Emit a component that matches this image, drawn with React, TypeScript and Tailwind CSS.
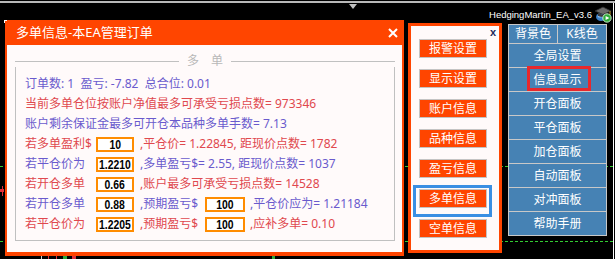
import React from "react";

const cjk = "font-['Noto_Sans','Noto_Sans_CJK_SC',sans-serif]";
const BLUE = "text-[#6a5acd]";
const RED = "text-[#e0484e]";

function ValueBox({ value, wide = false }: { value: string; wide?: boolean }) {
  return (
    <span
      className={`inline-flex h-[15px] shrink-0 items-center justify-center border-2 border-[#ff8c00] bg-white ${
        wide ? "w-[40px]" : "w-[38px]"
      }`}
    >
      <span className="inline-block scale-x-[0.8] font-['Liberation_Sans',sans-serif] text-[13px] font-bold leading-none text-black">
        {value}
      </span>
    </span>
  );
}

function Label({ children, w }: { children: React.ReactNode; w: string }) {
  return <span className={`shrink-0 ${w}`}>{children}</span>;
}

const menuButtons = ["报警设置", "显示设置", "账户信息", "品种信息", "盈亏信息", "多单信息", "空单信息"];
const panelButtons = ["全局设置", "信息显示", "开仓面板", "平仓面板", "加仓面板", "自动面板", "对冲面板", "帮助手册"];

function CapIcon() {
  return (
    <svg width="18" height="18" viewBox="0 0 18 18">
      <ellipse cx="7" cy="12" rx="5" ry="4" fill="#3a7fc8" />
      <ellipse cx="6" cy="11" rx="2.5" ry="1.6" fill="#9fd0ff" />
      <path d="M1 6 L9 2 L17 6 L9 9.5 Z" fill="#6b6b6b" stroke="#2c2c2c" strokeWidth="0.8" />
      <path d="M4 8 L4 11 Q9 13 14 11 L14 8 L9 10 Z" fill="#3b3b3b" />
      <line x1="16" y1="6" x2="16" y2="10" stroke="#c8a030" strokeWidth="1" />
      <circle cx="13" cy="13" r="4.2" fill="#2faa3a" stroke="#e8ffe8" strokeWidth="0.8" />
      <path d="M11.6 10.9 L15.4 13 L11.6 15.1 Z" fill="#ffffff" />
    </svg>
  );
}

export default function App() {
  return (
    <div className={`relative h-[259px] w-[615px] overflow-hidden bg-black ${cjk}`}>
      {/* chart background */}
      <div className="absolute left-0 right-0 top-[1px] h-[2px] bg-[#b8b8b8]" />
      <div className="absolute left-[613px] top-[3px] bottom-0 w-[1px] bg-white" />
      <div className="absolute left-0 top-[166px] w-[613px] border-t border-dashed border-[#32cd32]" />
      <div className="absolute left-0 top-[241px] w-[613px] border-t border-dashed border-[#32cd32]" />
      <div className="absolute left-[2px] top-[186px] h-[10px] w-[1px] bg-[#e0303a]" />
      <div className="absolute left-0 top-[189px] h-[3px] w-[4px] bg-[#e0303a]" />
      <div className="absolute left-[41px] top-[256px] h-[3px] w-[1px] bg-[#d0d0d0]" />
      <div className="absolute left-[48px] top-[256px] h-[3px] w-[1px] bg-[#e0303a]" />
      <div className="absolute left-[56px] top-[256px] h-[3px] w-[1px] bg-[#e0303a]" />
      <div className="absolute left-[63px] top-[256px] h-[3px] w-[4px] bg-[#2faa3a]" />
      <div className="absolute left-[72px] top-[256px] h-[3px] w-[4px] bg-[#e0303a]" />
      <div className="absolute left-[272px] top-[256px] h-[3px] w-[3px] bg-[#2faa3a]" />

      <div className="relative flex h-full flex-col">
        {/* header strip */}
        <div className="flex h-[20px] items-start">
          <div className="w-[349px] shrink-0" />
          <div className="mt-[4px] h-0 w-0 border-x-[4px] border-t-[5px] border-x-transparent border-t-[#c0c0c0]" />
          <div className="flex-1" />
          <span className="mt-[9px] font-['Liberation_Sans',sans-serif] text-[9.5px] leading-[12px] text-white">
            HedgingMartin_EA_v3.6
          </span>
          <div className="ml-[2px] mt-[5px] shrink-0">
            <CapIcon />
          </div>
          <div className="w-[3px] shrink-0" />
        </div>

        <div className="flex items-start">
          {/* main info panel */}
          <div className="ml-[5px] flex h-[236px] w-[399px] shrink-0 flex-col bg-[#ff4500] px-[2px] pb-[4px]">
            <div className="flex h-[25px] items-center justify-between pl-[9px] pr-[4px] text-[13px] leading-none text-white">
              <span>多单信息-本EA管理订单</span>
              <svg width="10" height="10" viewBox="0 0 10 10">
                <path d="M1 1 L9 9 M9 1 L1 9" stroke="#ffffff" strokeWidth="2" />
              </svg>
            </div>
            <div className="flex-1 bg-[#fffafa] pt-[10px]">
              <div className="ml-[8px] w-[380px]">
                <div className="flex h-[12px] items-center">
                  <div className="h-[1px] flex-1 bg-[#c0c0c0]" />
                  <span className="whitespace-pre px-[8px] text-[12px] leading-none text-[#b8b8b8]">多　单</span>
                  <div className="h-[1px] flex-1 bg-[#c0c0c0]" />
                </div>
                <div className="border-x border-b border-[#c0c0c0] pb-[6px] pl-[9px] pt-[7px] text-[12px] leading-[20px]">
                  <div className={`flex h-[20px] items-center whitespace-pre ${BLUE}`}>
                    订单数: 1  盈亏: -7.82  总合位: 0.01
                  </div>
                  <div className={`flex h-[20px] items-center whitespace-pre ${RED}`}>
                    当前多单仓位按账户净值最多可承受亏损点数= 973346
                  </div>
                  <div className={`flex h-[20px] items-center whitespace-pre ${BLUE}`}>
                    账户剩余保证金最多可开仓本品种多单手数= 7.13
                  </div>
                  <div className={`flex h-[20px] items-center whitespace-pre ${RED}`}>
                    <Label w="w-[71px]">若多单盈利$</Label>
                    <ValueBox value="10" />
                    <span className="ml-[6px]">,平仓价= 1.22845, 距现价点数= 1782</span>
                  </div>
                  <div className={`flex h-[20px] items-center whitespace-pre ${BLUE}`}>
                    <Label w="w-[71px]">若平仓价为</Label>
                    <ValueBox value="1.2210" />
                    <span className="ml-[6px]">,多单盈亏$= 2.55, 距现价点数= 1037</span>
                  </div>
                  <div className={`flex h-[20px] items-center whitespace-pre ${RED}`}>
                    <Label w="w-[71px]">若开仓多单</Label>
                    <ValueBox value="0.66" />
                    <span className="ml-[6px]">,账户最多可承受亏损点数= 14528</span>
                  </div>
                  <div className={`flex h-[20px] items-center whitespace-pre ${BLUE}`}>
                    <Label w="w-[71px]">若开仓多单</Label>
                    <ValueBox value="0.88" />
                    <span className="ml-[6px] w-[65px] shrink-0">,预期盈亏$</span>
                    <ValueBox value="100" wide />
                    <span className="ml-[5px]">,平仓价应为= 1.21184</span>
                  </div>
                  <div className={`flex h-[20px] items-center whitespace-pre ${RED}`}>
                    <Label w="w-[71px]">若平仓价为</Label>
                    <ValueBox value="1.2205" />
                    <span className="ml-[6px] w-[65px] shrink-0">,预期盈亏$</span>
                    <ValueBox value="100" wide />
                    <span className="ml-[5px]">,应补多单= 0.10</span>
                  </div>
                </div>
              </div>
            </div>
          </div>

          {/* menu panel */}
          <div className="ml-[4px] mt-[3px] flex h-[230px] w-[94px] shrink-0 flex-col border-[3px] border-[#ff4500] bg-[#fffafa]">
            <div className="flex h-[13px] items-start justify-end pr-[3px] pt-[1px]">
              <span className="font-['Liberation_Sans',sans-serif] text-[11px] font-bold leading-[10px] text-[#1c2a5c]">x</span>
            </div>
            <div className="flex flex-col gap-[11px] pl-[8px]">
              {menuButtons.map((b) => (
                <div
                  key={b}
                  className="flex h-[19px] w-[68px] items-center justify-center border border-[#c4c4c4] bg-[#ff4500] text-[12px] leading-none text-white"
                >
                  {b}
                </div>
              ))}
            </div>
          </div>

          {/* control panel */}
          <div className="ml-[6px] mt-[4px] flex w-[99px] shrink-0 flex-col">
            <div className="flex h-[20px]">
              <div className="flex flex-1 items-center justify-center border border-[#c8c8c8] bg-[#4682b4] text-[12px] leading-none text-white">
                背景色
              </div>
              <div className="flex flex-1 items-center justify-center border border-l-0 border-[#c8c8c8] bg-[#4682b4] text-[12px] leading-none text-white">
                K线色
              </div>
            </div>
            {panelButtons.map((b) => (
              <div
                key={b}
                className="flex h-[24px] items-center justify-center border-x border-b border-[#c8c8c8] bg-[#4682b4] text-[12px] leading-none text-white"
              >
                {b}
              </div>
            ))}
          </div>
        </div>
      </div>

      {/* highlight annotations */}
      <div className="absolute left-[413px] top-[185px] h-[32px] w-[79px] border-[3px] border-[#3a8fe3]" />
      <div className="absolute left-[527px] top-[66px] h-[25px] w-[64px] border-[3px] border-[#e8282c]" />
      <div className="absolute left-[4px] top-[20px] h-[3px] w-[3px] border-l border-t border-white" />
    </div>
  );
}
